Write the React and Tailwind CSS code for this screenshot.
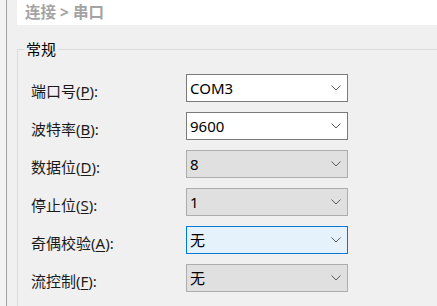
import { useState } from "react";

const font = { fontFamily: '"Noto Sans", "Noto Sans CJK SC", sans-serif' };

// Little chevron used by every combo box
function Chevron(){
    return(
        <svg width="10" height="6" viewBox="0 0 10 6" className="shrink-0">
            <path d="M0.5 0.5 L5 5 L9.5 0.5" fill="none" stroke="#5a5a5a" strokeWidth="1" />
        </svg>
    )
}

function Mnemonic({ text, letter }){
    return(
        <span>
            {text}(<span className="underline underline-offset-2">{letter}</span>):
        </span>
    )
}

function Combo({ value, kind }){
    const look = {
        normal: "bg-white border-[#7a7a7a]",
        disabled: "bg-[#e0e0e0] border-[#adadad]",
        focus: "bg-[#e5f1fb] border-[#0078d7]",
    }[kind]

    return(
        <div className={`w-[162px] h-[28px] border flex items-center justify-between pl-[3px] pr-[6px] text-[15px] text-black ${look}`}>
            <span>{value}</span>
            <Chevron/>
        </div>
    )
}

export default function App(){
    const [rows] = useState([
        { text: "端口号", letter: "P", value: "COM3", kind: "normal" },
        { text: "波特率", letter: "B", value: "9600", kind: "normal" },
        { text: "数据位", letter: "D", value: "8", kind: "disabled" },
        { text: "停止位", letter: "S", value: "1", kind: "disabled" },
        { text: "奇偶校验", letter: "A", value: "无", kind: "focus" },
        { text: "流控制", letter: "F", value: "无", kind: "disabled" },
    ])

    return(
        <div style={font} className="w-[437px] h-[306px] overflow-hidden bg-[#f0f0f0] flex">

            {/* Left strip and splitter line */}
            <div className="w-[6px] h-full bg-[#f3f3f3]" />
            <div className="w-[1px] h-full bg-[#a0a0a0]" />

            {/* Page content */}
            <div className="flex-1 flex flex-col pl-[10px]">

                {/* Breadcrumb */}
                <div className="h-[25px] bg-white flex items-center pl-[8px] text-[15.5px] font-bold text-[#a3a3a3] leading-none">
                    连接 &gt; 串口
                </div>

                {/* Group box */}
                <fieldset className="mt-[14px] flex-1 border-l border-t border-[#dcdcdc] pl-[13px] pt-[15px]">
                    <legend className="-ml-[7px] px-[2px] text-[15px] leading-[20px] text-black">常规</legend>

                    <div className="flex flex-col gap-[9.5px]">
                        {rows.map((r) => (
                            <div key={r.letter} className="flex items-center">
                                <div className="w-[155px] text-[15px] text-[#1a1a1a] pt-[6px]">
                                    <Mnemonic text={r.text} letter={r.letter} />
                                </div>
                                <Combo value={r.value} kind={r.kind} />
                            </div>
                        ))}
                    </div>
                </fieldset>

            </div>
        </div>
    )
}
